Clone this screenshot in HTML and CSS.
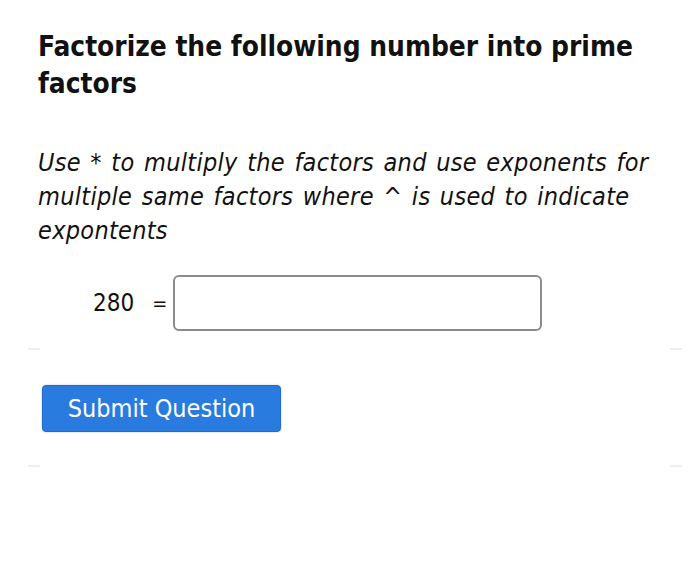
FILE: index.html
```
<!DOCTYPE html>
<html>
<head>
<meta charset="utf-8">
<link rel="stylesheet" href="styles.css">
</head>
<body>
<div class="page">
  <h1 class="title">Factorize the following number into prime factors</h1>
  <p class="instructions">Use * to multiply the factors and use exponents for multiple same factors where ^ is used to indicate expontents</p>
  <div class="answer-row">
    <span class="number">280</span>
    <span class="equals">=</span>
    <input class="answer" type="text">
  </div>
  <div class="divider"><span></span><span></span></div>
  <button class="submit">Submit Question</button>
  <div class="divider lower"><span></span><span></span></div>
</div>
</body>
</html>
```
FILE: styles.css
```
html, body {
  margin: 0;
  padding: 0;
  background: #fff;
}
body {
  font-family: "DejaVu Sans Condensed", "DejaVu Sans", sans-serif;
  color: #111;
}
.page {
  padding: 28px 30px 0 38px;
}
.title {
  margin: 0;
  font-size: 27.8px;
  font-weight: bold;
  line-height: 37px;
  color: #111;
}
.instructions {
  margin: 44px 0 0 0;
  max-width: 615px;
  font-size: 25px;
  font-style: italic;
  line-height: 34px;
  word-spacing: 2px;
  letter-spacing: 0.3px;
  color: #111;
}
.answer-row {
  display: flex;
  align-items: center;
  margin-top: 27px;
  padding-left: 55px;
}
.number {
  font-size: 24px;
}
.equals {
  font-size: 20px;
  margin-left: 18px;
  margin-right: 6px;
}
.answer {
  flex: none;
  width: 369px;
  height: 56px;
  box-sizing: border-box;
  border: 2px solid #8c8c8c;
  border-radius: 6px;
  background: #fff;
  margin: 0;
  padding: 0;
}
.divider {
  display: flex;
  justify-content: space-between;
  margin: 17px -12px 0 -10px;
  height: 2px;
}
.divider span {
  width: 12px;
  height: 2px;
  background: #eee;
}
.submit {
  display: block;
  margin-top: 35px;
  margin-left: 4px;
  width: 239px;
  height: 47px;
  background: #2a7be0;
  color: #fff;
  border: 1px solid #1f6bd0;
  border-radius: 4px;
  font-family: "DejaVu Sans Condensed", "DejaVu Sans", sans-serif;
  font-size: 25px;
  padding: 0;
  box-shadow: 0 0 2px rgba(0,0,0,0.25);
}
.divider.lower {
  margin-top: 33px;
}
```
